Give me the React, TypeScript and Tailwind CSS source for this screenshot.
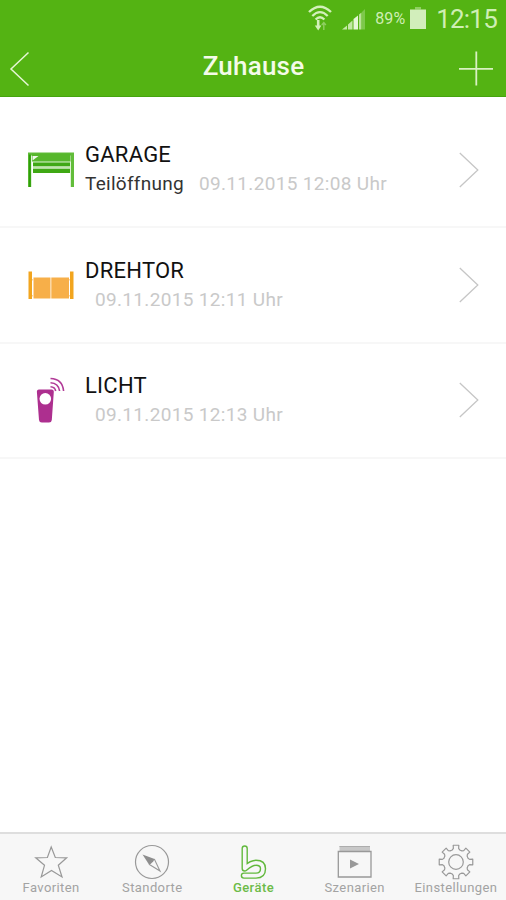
// Geräteliste — Statusleiste, Kopfzeile, Geräte eines Standorts und Tab-Leiste.
import type { ReactNode } from "react";
import clsx from "clsx";

type Device = {
  name: string;
  state?: string;
  date: string;
  icon: ReactNode;
};

const devices: Device[] = [
  {
    name: "GARAGE",
    state: "Teilöffnung",
    date: "09.11.2015 12:08 Uhr",
    icon: <GarageIcon />,
  },
  { name: "DREHTOR", date: "09.11.2015 12:11 Uhr", icon: <GateIcon /> },
  { name: "LICHT", date: "09.11.2015 12:13 Uhr", icon: <RemoteIcon /> },
];

const tabs = [
  { label: "Favoriten", icon: <StarIcon /> },
  { label: "Standorte", icon: <CompassIcon /> },
  { label: "Geräte", icon: <LogoIcon />, active: true },
  { label: "Szenarien", icon: <SceneIcon /> },
  { label: "Einstellungen", icon: <GearIcon /> },
];

export default function App() {
  return (
    <div className="flex h-[900px] w-[506px] flex-col overflow-hidden bg-white font-['Roboto',sans-serif]">
      <header className="h-[97px] shrink-0 border-b border-[#45a40f] bg-[#54b313] text-[#f4fbe9]">
        <StatusBar />
        <div className="flex h-[58px] items-center justify-between pr-[13px] pl-[9px]">
          <button type="button" aria-label="Zurück" className="w-[39px]">
            <svg width="22" height="36" viewBox="0 0 22 36" className="mt-[3px]">
              <path
                d="M19.500 1.500 L2 18 L19.500 34.500"
                fill="none"
                stroke="#e6f6d6"
                strokeWidth="1.500"
              />
            </svg>
          </button>
          <h1 className="pb-[2px] text-[26px] leading-[30px] font-medium tracking-[0.2px]">
            Zuhause
          </h1>
          <button type="button" aria-label="Gerät hinzufügen">
            <svg width="34" height="36" viewBox="0 0 34 36" className="mt-[3px]">
              <path
                d="M0 17.800 H34 M17.300 0.500 V34.500"
                fill="none"
                stroke="#d9f1c2"
                strokeWidth="1.800"
              />
            </svg>
          </button>
        </div>
      </header>

      <ul className="flex-1 pt-4">
        {devices.map((d) => (
          <DeviceRow key={d.name} {...d} />
        ))}
      </ul>

      <nav className="grid h-[68px] shrink-0 grid-cols-5 border-t-2 border-[#dedede] bg-[#f7f7f7]">
        {tabs.map((tab) => (
          <button
            key={tab.label}
            type="button"
            className={clsx(
              "flex flex-col items-center pt-[10px] pl-px text-[13px] leading-4",
              tab.active
                ? "font-medium tracking-[0.450px] text-[#6cbb48]"
                : "tracking-[0.400px] text-[#a3a3a3]",
            )}
          >
            {tab.icon}
            <span className="whitespace-nowrap">{tab.label}</span>
          </button>
        ))}
      </nav>
    </div>
  );
}

function StatusBar() {
  return (
    <div className="flex h-[38px] items-center justify-end pr-[9px] text-[#cfeeb4]">
      {/* WLAN mit Datenpfeilen */}
      <svg width="24" height="28" viewBox="0 0 24 28" fill="none" stroke="#d3f0bb">
        <path d="M1 7 Q12 -3.500 23 7" strokeWidth="2.400" />
        <path d="M4.300 11 Q12 3.300 19.700 11" strokeWidth="2.300" />
        <path d="M7.600 14.500 Q12 10 16.400 14.500" strokeWidth="2.300" />
        <path d="M10.200 15 V23" strokeWidth="2.600" />
        <path d="M6.800 20.500 H13.400 L10.200 25.500 Z" fill="#d3f0bb" stroke="none" />
        <path d="M15.800 25 V18 M13.700 20 L15.800 17.500 L17.900 20" stroke="#8fcf62" strokeWidth="1.400" />
      </svg>
      {/* Mobilfunk */}
      <svg width="24" height="24" viewBox="0 0 24 24" className="ml-[10px]">
        <path d="M0 22.500 L5 18.500 V22.500 Z" fill="#c3e8a5" />
        <path d="M6 17.500 L10.500 13.500 V22.500 H6 Z" fill="#c3e8a5" />
        <path d="M11.500 12 L16 8.500 V22.500 H11.500 Z" fill="#e6f7d8" />
        <path d="M17 7.500 L19.500 5.500 V22.500 H17 Z" fill="#b9e498" />
        <path d="M20 5 L23 2 V22.500 H20 Z" fill="#7dc84b" />
      </svg>
      <span className="ml-[9px] w-[33px] text-[16px] tracking-[0.1px]">89%</span>
      <svg width="16" height="22" viewBox="0 0 16 22" className="-mt-[2px] ml-[2px]">
        <path d="M5 0 H11 V2.500 H5 Z" fill="#8fcf62" />
        <path d="M0 2.500 H16 V22 H0 Z" fill="#d2eebb" />
      </svg>
      <span className="ml-[10px] text-[26px] leading-[30px] tracking-[-0.800px]">12:15</span>
    </div>
  );
}

function DeviceRow({ name, state, date, icon }: Device) {
  return (
    <li className="flex h-[115.400px] items-center border-b-2 border-[#f7f7f7] pr-[27px] pl-[28px]">
      <span className="w-[57px] shrink-0">{icon}</span>
      <div className="min-w-0 flex-1 pb-px">
        <p className="text-[22px] leading-[30px] tracking-[0.250px] text-[#111]">{name}</p>
        <p className="text-[19px] leading-[28px] text-[#c9c9c9]">
          {state && (
            <span className="mr-[15px] tracking-[0.280px] text-[#333]">{state}</span>
          )}
          <span className={clsx("tracking-[0.330px]", !state && "ml-[10px]")}>{date}</span>
        </p>
      </div>
      <svg width="20" height="36" viewBox="0 0 20 36" className="shrink-0">
        <path
          d="M0.800 1 L18.800 18 L0.800 35"
          fill="none"
          stroke="#c6c6c6"
          strokeWidth="1.300"
        />
      </svg>
    </li>
  );
}

function GarageIcon() {
  return (
    <svg width="46" height="36" viewBox="0 0 46 36">
      <path d="M0 0.500 H46 V35 H42.800 V3.500 H3.200 V35 H0 Z" fill="#62bd3a" />
      <path d="M4 1.500 H42.500 V9.500 H4 Z" fill="#57b72c" />
      <path d="M4.500 4 H10.500 L4.500 8.500 Z" fill="#f1faec" />
      <path d="M5 9.500 H42 V10.800 H5 Z" fill="#8ccf6c" />
      <path d="M5 10.800 H42 V14.500 H5 Z M5 16.500 H42 V21 H5 Z" fill="#3fa814" />
      <path d="M5 14.500 H42 V16.500 H5 Z" fill="#bfe6ab" />
      <path d="M0.800 2.500 H2.800 V35 H0.800 Z" fill="#2f9e08" />
    </svg>
  );
}

function GateIcon() {
  return (
    <svg width="46" height="30" viewBox="0 0 46 30">
      <path d="M0.500 1.500 H4 V29 H0.500 Z M42 1.500 H45.500 V29 H42 Z" fill="#f2a51f" />
      <path d="M5.500 7.500 H22.500 V28.500 H5.500 Z M23.300 7.500 H41 V28.500 H23.300 Z" fill="#f7af49" />
      <path d="M4 9 H6 V10.500 H4 Z M4 25 H6 V26.500 H4 Z M41 9 H42 V10.500 H41 Z M41 25 H42 V26.500 H41 Z" fill="#fbd7a2" />
    </svg>
  );
}

function RemoteIcon() {
  return (
    <svg width="46" height="46" viewBox="0 0 46 46">
      <path
        d="M11 12.500 H23.500 Q26 12.500 25.800 15 L23.800 43 Q23.600 45.500 21 45.500 H13.800 Q11.300 45.500 11 43 L8.900 15 Q8.700 12.500 11 12.500 Z"
        fill="#ad2f8f"
      />
      <circle cx="17.300" cy="21.800" r="5.800" fill="#fff" />
      <g fill="none" stroke="#b23b98" strokeWidth="1.600">
        <path d="M22.500 9.700 Q27 9.900 27.700 14" />
        <path d="M22.500 5.700 Q30.500 6 31.600 14" />
        <path d="M22.500 1.500 Q34.500 1.900 35.600 14" />
      </g>
    </svg>
  );
}

function StarIcon() {
  return (
    <svg width="36" height="36" viewBox="0 0 36 36" fill="none" stroke="#999">
      <path
        d="M18.200 3 L22.300 13.500 L33.700 13.800 L25.300 21.300 L29 33 L18.500 26.500 L8.200 33 L11.500 21.300 L2.700 13.800 L14.400 13.500 Z"
        strokeWidth="1.200"
      />
    </svg>
  );
}

function CompassIcon() {
  return (
    <svg width="36" height="36" viewBox="0 0 36 36">
      <circle cx="18" cy="18" r="16.500" fill="none" stroke="#999" strokeWidth="1.200" />
      <path
        d="M20.300 15 L26 27 L15 20.300"
        fill="none"
        stroke="#999"
        strokeWidth="1.100"
      />
      <path d="M8.500 10.500 L20.600 15 L19.200 17.400 L17.400 19.200 L15 20.600 Z" fill="#8e8e8e" />
    </svg>
  );
}

// Schlaufen-Logo: breite grüne Linie, darüber eine schmalere in Hintergrundfarbe
function LogoIcon() {
  const d =
    "M9.700 4.500 V24.500 Q16.500 18.800 21 18.800 Q28 18.800 28 24.800 Q28 31.600 21 31.600 H8.900";
  return (
    <svg
      width="36"
      height="36"
      viewBox="0 0 36 36"
      fill="none"
      strokeLinecap="round"
      strokeLinejoin="round"
    >
      <path d={d} stroke="#62b93d" strokeWidth="6.400" />
      <path d={d} stroke="#f7f7f7" strokeWidth="3.600" />
    </svg>
  );
}

function SceneIcon() {
  return (
    <svg width="36" height="36" viewBox="0 0 36 36">
      <path d="M2.500 2 H33 V7 H2.500 Z" fill="#c8c8c8" />
      <path d="M2.500 2.500 H33" stroke="#adadad" />
      <path d="M1.300 7.500 H34 V33 H1.300 Z" fill="none" stroke="#999" strokeWidth="1.300" />
      <path d="M13 15.500 L22 20 L13 24.500 Z" fill="#999" />
    </svg>
  );
}

// acht Zähne, je sechs Eckpunkte [Radius, Winkelversatz]
const gearPoints = Array.from({ length: 8 }, (_, i) =>
  [
    [12.6, -17],
    [13.8, -11],
    [17, -9.5],
    [17, 9.5],
    [13.8, 11],
    [12.6, 17],
  ].map(([r, offset]) => {
    const a = ((i * 45 + offset) * Math.PI) / 180;
    return `${(18 + r * Math.cos(a)).toFixed(2)},${(18 + r * Math.sin(a)).toFixed(2)}`;
  }),
)
  .flat()
  .join(" ");

function GearIcon() {
  return (
    <svg width="36" height="36" viewBox="0 0 36 36" fill="none" stroke="#999">
      <polygon points={gearPoints} strokeWidth="1.200" strokeLinejoin="round" />
      <circle cx="18" cy="18" r="7.300" strokeWidth="1.200" />
    </svg>
  );
}
